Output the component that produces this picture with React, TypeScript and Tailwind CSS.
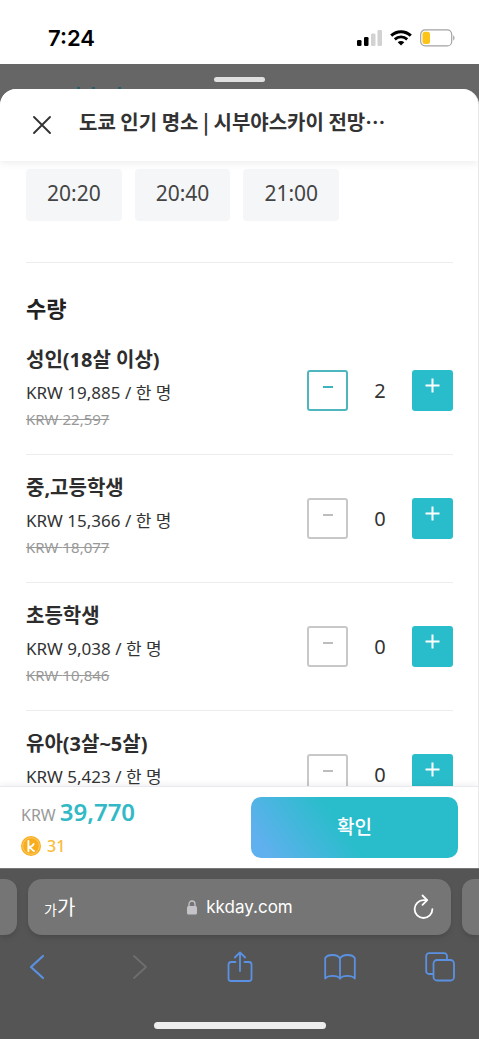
import { useState } from 'react'

type Ticket = { name: string; price: number; original?: number; initial: number }

const TIME_SLOTS = ['20:20', '20:40', '21:00']

const TICKETS: Ticket[] = [
  { name: '성인(18살 이상)', price: 19885, original: 22597, initial: 2 },
  { name: '중,고등학생', price: 15366, original: 18077, initial: 0 },
  { name: '초등학생', price: 9038, original: 10846, initial: 0 },
  { name: '유아(3살~5살)', price: 5423, initial: 0 },
]

const formatNumber = (n: number) => n.toLocaleString('en-US')

function StatusBar() {
  return (
    <div className="h-16 shrink-0 bg-white pl-12 pr-6 pt-3 flex items-center justify-between font-['Inter','Liberation_Sans',sans-serif]">
      <span className="text-[22px] leading-7 font-semibold text-black">7:24</span>
      <div className="flex items-center gap-2">
        <svg width="26" height="16" viewBox="0 0 26 16" aria-hidden="true">
          <rect x="1" y="10" width="4.5" height="6" rx="1.3" fill="#000" />
          <rect x="8" y="7" width="4.5" height="9" rx="1.3" fill="#000" />
          <rect x="15" y="3.5" width="4.5" height="12.5" rx="1.3" fill="#d2d2d2" />
          <rect x="21.5" y="0" width="4.5" height="16" rx="1.3" fill="#d2d2d2" />
        </svg>
        <svg width="22" height="16" viewBox="0 0 22 16" fill="none" stroke="#000" aria-hidden="true">
          <path d="M1.2 5.6C6.8 .3 15.2 .3 20.8 5.6" strokeWidth="3" />
          <path d="M4.8 9.4c3.6-3.3 8.8-3.3 12.4 0" strokeWidth="2.8" />
          <path d="M11 15.6 7.7 12.3c1.9-1.7 4.7-1.7 6.6 0z" fill="#000" stroke="none" />
        </svg>
        <svg width="35" height="18" viewBox="0 0 35 18" fill="none" aria-hidden="true">
          <rect x=".7" y=".9" width="31" height="16" rx="4.5" stroke="#a3a3a3" strokeWidth="1.2" />
          <rect x="2.5" y="2.7" width="7.5" height="12.4" rx="2.5" fill="#fcc419" />
          <path d="M33.2 6.2c1.7.7 1.7 4.7 0 5.4z" fill="#a3a3a3" />
        </svg>
      </div>
    </div>
  )
}

function TicketRow({ ticket }: { ticket: Ticket }) {
  const [count, setCount] = useState(ticket.initial)

  return (
    <li className="border-b border-[#ededed] pt-5 pb-[21px] flex items-start justify-between">
      <div>
        <h3 className="text-xl leading-[26px] font-bold text-[#2d2d2d]">{ticket.name}</h3>
        <p className="mt-2 text-[17px] leading-6 text-[#333]">KRW {formatNumber(ticket.price)} / 한 명</p>
        {ticket.original && (
          <p className="text-[15px] leading-7 text-[#999]">
            <del>KRW {formatNumber(ticket.original)}</del>
          </p>
        )}
      </div>
      <div className="mt-[23px] flex items-center">
        <button
          type="button"
          aria-label={`${ticket.name} 빼기`}
          disabled={count === 0}
          onClick={() => setCount(count - 1)}
          className="size-[41px] rounded-[3px] border-2 border-[#4db6bf] text-[#3cb3bd] disabled:border-[#c8c8c8] disabled:text-[#bdbdbd] bg-white pb-2 flex items-center justify-center"
        >
          <svg width="12" height="2" viewBox="0 0 12 2" aria-hidden="true">
            <path d="M1 1h10" stroke="currentColor" strokeWidth="2" />
          </svg>
        </button>
        <output className="w-16 text-center text-xl text-[#333]">{count}</output>
        <button
          type="button"
          aria-label={`${ticket.name} 더하기`}
          onClick={() => setCount(count + 1)}
          className="size-[41px] rounded-[3px] bg-[#29bdcb] text-white pb-2.5 flex items-center justify-center"
        >
          <svg width="15" height="15" viewBox="0 0 15 15" aria-hidden="true">
            <path d="M.5 7.5h14M7.5.5v14" stroke="currentColor" strokeWidth="2" />
          </svg>
        </button>
      </div>
    </li>
  )
}

function BookingSheet() {
  return (
    <section className="flex-1 min-h-0 rounded-t-2xl border-r border-[#e8e8e8] bg-white overflow-hidden flex flex-col font-['Noto_Sans','Noto_Sans_CJK_KR',sans-serif]">
      <header className="relative z-10 h-[72px] shrink-0 rounded-t-2xl bg-white pl-8 pr-20 flex items-center gap-[27px] shadow-[0_2px_8px_rgba(0,0,0,0.08)]">
        <button type="button" aria-label="닫기" className="shrink-0 text-[#333]">
          <svg width="20" height="20" viewBox="0 0 20 20" fill="none" stroke="currentColor" strokeWidth="1.9" strokeLinecap="round" aria-hidden="true">
            <path d="m2 2 16 16M18 2 2 18" />
          </svg>
        </button>
        <h1 className="pb-1.5 text-xl leading-7 font-bold text-[#333] whitespace-nowrap font-['Noto_Sans_CJK_KR',sans-serif]">
          도쿄 인기 명소 | 시부야스카이 전망⋯
        </h1>
      </header>

      <div className="flex-1 min-h-0 overflow-hidden pl-[26px] pr-[25px] pt-2">
        <div className="flex gap-[13px] pb-[41px] border-b border-[#ededed]">
          {TIME_SLOTS.map((slot) => (
            <button
              key={slot}
              type="button"
              className="h-[52px] px-[21px] pb-0.5 rounded bg-[#f5f6f8] text-[21px] text-[#444]"
            >
              {slot}
            </button>
          ))}
        </div>
        <h2 className="pt-[30px] pb-1 text-[22px] leading-[30px] font-bold text-[#222]">수량</h2>
        <ul>
          {TICKETS.map((ticket) => (
            <TicketRow key={ticket.name} ticket={ticket} />
          ))}
        </ul>
      </div>

      <footer className="relative z-10 shrink-0 bg-white border-t border-[#e9e9ef] pl-[21px] pr-5 pt-2.5 pb-2.5 flex justify-between shadow-[0_-2px_6px_rgba(0,0,0,0.06)]">
        <div>
          <p className="flex items-baseline gap-1 leading-[30px]">
            <span className="text-base leading-[30px] text-[#999]">KRW</span>
            <strong className="text-2xl leading-[30px] font-semibold text-[#33b9c6]">39,770</strong>
          </p>
          <p className="mt-1 flex items-center gap-1.5 text-base leading-6 font-medium text-[#f9bc3c]">
            <svg width="20" height="20" viewBox="0 0 20 20" fill="none" aria-hidden="true">
              <circle cx="10" cy="10" r="10" fill="#f9ad1c" />
              <circle cx="10" cy="10" r="8.3" stroke="#fdd27c" strokeWidth=".8" />
              <path d="M7.4 5v10.2M12.6 8c-.8 2-2.6 3-5.2 3.2 2.8-.3 3.6 3.6 5.6 3.8" stroke="#fff" strokeWidth="1.9" strokeLinecap="round" />
            </svg>
            31
          </p>
        </div>
        <button
          type="button"
          className="h-[61px] w-[207px] rounded-[10px] bg-[linear-gradient(55deg,#5fb0ee_8%,#29bdcb_45%)] text-[19px] font-medium text-white"
        >
          확인
        </button>
      </footer>
    </section>
  )
}

function BrowserBar() {
  return (
    <div className="shrink-0 overflow-hidden bg-[#555] border-t border-[#777] pt-2.5 font-['Inter','Noto_Sans_CJK_KR',sans-serif]">
      <div className="flex gap-[11px]">
        <div className="w-[17px] h-14 rounded-r-xl bg-[#757575] shadow-md" />
        <div className="flex-1 h-14 rounded-[14px] bg-[#757575] px-4 flex items-center justify-between text-white shadow-md">
          <button type="button" aria-label="글자 크기" className="w-8 flex items-baseline whitespace-nowrap font-['Noto_Sans_CJK_KR',sans-serif]">
            <span className="text-sm">가</span>
            <span className="text-xl">가</span>
          </button>
          <a href="#" className="flex items-center gap-2 text-[17px] leading-6">
            <svg width="12" height="15" viewBox="0 0 12 15" fill="none" aria-hidden="true">
              <rect x="1" y="6" width="10" height="8.5" rx="1.5" fill="#c4c4c8" />
              <path d="M3 6.5V4a3 3 0 0 1 6 0v2.5" stroke="#c4c4c8" strokeWidth="1.3" />
            </svg>
            kkday.com
          </a>
          <button type="button" aria-label="새로고침" className="w-8 flex justify-end">
            <svg width="24" height="26" viewBox="0 0 24 26" fill="none" stroke="currentColor" strokeWidth="1.8" strokeLinecap="round" strokeLinejoin="round" aria-hidden="true">
              <path d="M15.8 6.2h-3.3a8.9 8.9 0 1 0 8.900 8.900" />
              <path d="m11.500 1.500 4.700 4.700-4.700 4.700" />
            </svg>
          </button>
        </div>
        <div className="w-[17px] h-14 rounded-l-xl bg-[#757575] shadow-md" />
      </div>

      <nav className="h-16 px-[23px] flex items-center justify-between text-[#5b91e2]">
        <button type="button" aria-label="뒤로" className="w-8 flex justify-start">
          <svg width="24" height="26" viewBox="0 0 24 26" fill="none" stroke="currentColor" strokeWidth="2.2" strokeLinecap="round" strokeLinejoin="round" aria-hidden="true">
            <path d="M20 2 8 13l12 11" />
          </svg>
        </button>
        <button type="button" aria-label="앞으로" disabled className="w-8 flex justify-center text-[#6e6e6e]">
          <svg width="24" height="26" viewBox="0 0 24 26" fill="none" stroke="currentColor" strokeWidth="1.8" strokeLinecap="round" strokeLinejoin="round" aria-hidden="true">
            <path d="m7 2 12 11L7 24" />
          </svg>
        </button>
        <button type="button" aria-label="공유" className="w-8 flex justify-center">
          <svg width="26" height="32" viewBox="0 0 26 32" fill="none" stroke="currentColor" strokeWidth="1.8" strokeLinecap="round" strokeLinejoin="round" aria-hidden="true">
            <path d="M8.5 11H4a2.5 2.5 0 0 0-2.5 2.5v14A2.5 2.5 0 0 0 4 30h18a2.5 2.5 0 0 0 2.5-2.5v-14A2.5 2.5 0 0 0 22 11h-4.5" />
            <path d="M13 20V1.5M7.8 6.5 13 1.5l5.2 5" />
          </svg>
        </button>
        <button type="button" aria-label="책갈피" className="w-8 flex justify-center">
          <svg width="32" height="28" viewBox="0 0 32 28" fill="none" stroke="currentColor" strokeWidth="1.8" strokeLinecap="round" strokeLinejoin="round" aria-hidden="true">
            <path d="M16 5.5C13.5 1 4 .8 1.2 5v20.5c3-3.500 12-3.500 14.800 0 2.800-3.500 11.800-3.500 14.800 0V5C28 .8 18.500 1 16 5.500z" />
            <path d="M16 5.5v20" />
          </svg>
        </button>
        <button type="button" aria-label="탭" className="w-8 flex justify-center">
          <svg width="30" height="30" viewBox="0 0 30 30" fill="none" stroke="currentColor" strokeWidth="1.8" strokeLinejoin="round" aria-hidden="true">
            <rect x="8.5" y="8" width="20.5" height="20.5" rx="3.5" />
            <path d="M8.5 22H4a2.8 2.8 0 0 1-2.8-2.8V4A2.8 2.8 0 0 1 4 1.2h15.2A2.8 2.8 0 0 1 22 4v4" />
          </svg>
        </button>
      </nav>

      <div className="pt-[23px] pb-2.5 flex justify-center">
        <div className="h-[7px] w-[172px] rounded-full bg-[#eee]" />
      </div>
    </div>
  )
}

export default function App() {
  return (
    <div className="h-screen flex flex-col overflow-hidden bg-[#666]">
      <StatusBar />
      <div className="relative h-[25px] shrink-0 flex justify-center items-center pt-1.5">
        <div className="h-[5px] w-[51px] rounded-full bg-[#e0e0e0]" />
        {/* top edge of the site logo behind the sheet */}
        <svg className="absolute bottom-0 left-[76px]" width="48" height="2" viewBox="0 0 48 2" fill="#2c5d64" aria-hidden="true">
          <path d="M1 0h3v2H1zM16 0h3v2h-3zM42 0h3v2h-3z" />
        </svg>
      </div>
      <BookingSheet />
      <BrowserBar />
    </div>
  )
}
